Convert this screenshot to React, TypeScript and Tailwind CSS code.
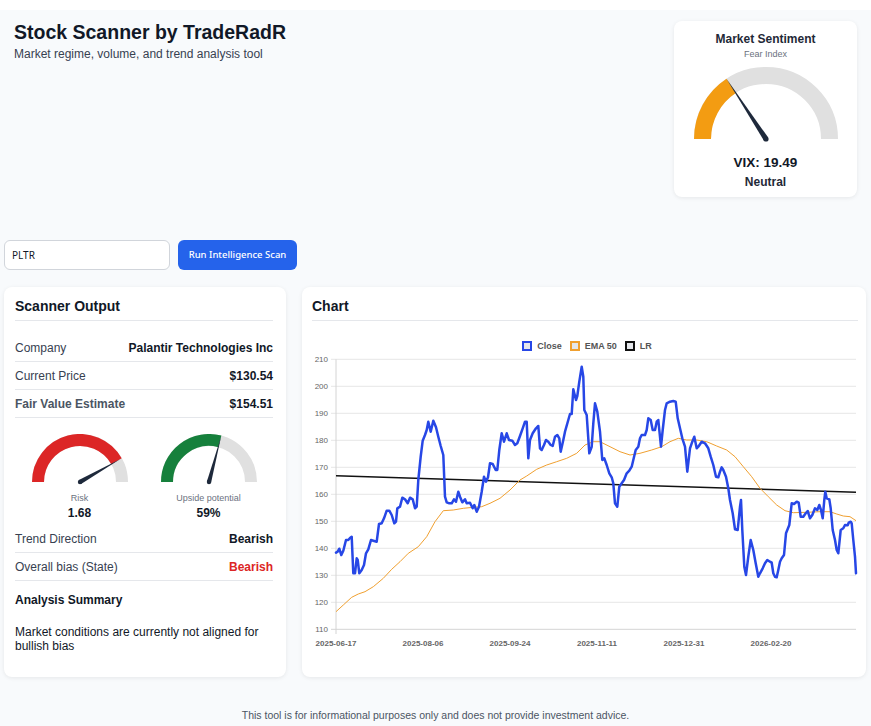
import React from "react";

// traced close / ema points, in zoomed crop coordinates (3x), converted to page coords below
const CLOSE_A: [number, number][] = [
  [108, 638], [113, 635], [118, 626], [124, 645], [130, 632], [138, 600], [145, 600], [150, 594], [155, 590],
  [160, 700], [165, 700], [170, 655], [173, 660], [178, 700], [185, 690], [192, 675], [198, 640], [205, 628],
  [213, 600], [220, 602], [230, 605], [237, 552], [245, 550], [252, 535], [260, 512], [268, 512], [275, 525],
  [283, 550], [288, 545], [292, 505], [300, 500], [307, 473], [315, 478], [323, 490], [330, 473], [338, 478],
  [345, 505], [350, 500], [355, 420], [362, 350], [368, 302], [375, 285], [380, 270], [385, 245], [392, 275],
  [400, 242], [408, 262], [415, 290], [422, 318], [430, 345], [435, 470], [440, 487], [448, 490], [455, 490],
  [462, 478], [468, 485], [475, 455], [480, 470], [487, 487], [495, 478], [500, 490], [510, 488], [518, 505],
  [523, 495], [530, 515], [537, 500], [545, 455], [552, 410], [558, 425], [564, 412], [570, 370], [578, 372],
  [587, 390], [592, 390], [598, 330], [605, 280], [612, 305], [620, 280], [627, 300], [637, 302], [645, 315],
  [652, 310], [660, 288], [668, 265], [675, 245], [680, 245], [685, 355], [690, 300], [698, 280], [708, 265],
  [715, 258], [720, 325], [725, 330], [732, 315], [738, 300], [745, 305], [752, 315], [758, 318], [765, 290],
  [772, 285], [778, 295], [782, 335], [790, 300], [795, 275], [805, 240], [810, 222], [815, 222], [820, 148],
  [828, 180], [832, 168], [838, 125],
];

const CLOSE_B: [number, number][] = [
  [5, 80], [10, 110], [13, 210], [20, 225], [28, 340], [35, 320], [40, 250], [45, 190], [52, 215], [60, 275],
  [67, 360], [73, 355], [80, 375], [88, 400], [95, 412], [100, 430], [105, 490], [112, 500], [118, 440],
  [125, 430], [132, 420], [140, 400], [148, 392], [155, 380], [160, 360], [167, 330], [175, 320], [180, 295],
  [185, 285], [195, 285], [200, 270], [205, 235], [212, 240], [218, 270], [225, 270], [230, 245], [235, 240],
  [238, 270], [243, 320], [248, 270], [255, 210], [260, 190], [270, 185], [280, 183], [287, 185], [293, 235],
  [300, 265], [307, 295], [315, 320], [322, 395], [330, 325], [337, 305], [343, 290], [350, 325], [355, 320],
  [365, 305], [375, 310], [385, 325], [392, 350], [400, 375], [408, 410], [415, 412], [420, 395], [425, 382],
  [430, 390], [438, 410], [445, 445], [450, 480], [458, 520], [465, 568], [473, 570], [480, 500], [483, 480],
  [487, 570], [493, 680], [498, 705], [505, 650], [512, 600], [520, 630], [527, 670], [535, 710], [540, 700],
  [548, 685], [555, 670], [562, 660], [570, 665], [575, 668], [580, 700], [585, 710], [590, 712], [595, 690],
  [600, 665], [605, 655], [612, 645], [618, 580], [622, 570], [628, 555], [635, 490], [642, 492], [650, 485],
  [656, 488], [662, 530], [670, 530], [677, 520], [683, 513], [690, 535], [697, 525], [705, 505], [712, 510],
  [718, 495], [723, 510], [728, 535], [733, 480], [736, 455], [740, 475], [748, 478], [752, 505], [758, 570],
  [765, 600], [770, 630], [775, 640], [782, 570], [790, 565], [795, 555], [803, 556], [806, 548], [812, 545],
  [815, 550], [820, 600], [825, 650], [828, 700],
];

const EMA_A: [number, number][] = [
  [108, 815], [130, 795], [155, 772], [175, 762], [195, 755], [220, 740], [250, 715], [275, 688], [300, 665],
  [325, 640], [355, 620], [380, 590], [405, 545], [430, 512], [460, 510], [490, 505], [520, 502], [545, 500],
  [570, 490], [600, 475], [630, 450], [660, 420], [680, 408], [710, 388], [740, 375], [770, 365], [800, 355],
  [830, 340],
];

const EMA_B: [number, number][] = [
  [0, 330], [15, 315], [40, 305], [60, 305], [90, 320], [120, 335], [150, 345], [180, 340], [215, 330],
  [245, 320], [270, 305], [295, 295], [320, 300], [350, 300], [380, 305], [410, 318], [440, 330], [465, 350],
  [490, 380], [515, 410], [540, 445], [565, 470], [590, 495], [615, 512], [640, 518], [680, 517], [720, 515],
  [750, 515], [770, 522], [790, 528], [810, 530], [828, 542],
];

const toPts = (a: [number, number][], b: [number, number][]) =>
  [...a.map(([x, y]) => [300 + x / 3, 340 + y / 3]), ...b.map(([x, y]) => [580 + x / 3, 340 + y / 3])]
    .map(([x, y]) => `${x.toFixed(1)},${y.toFixed(1)}`)
    .join(" ");

const Y_TICKS = [210, 200, 190, 180, 170, 160, 150, 140, 130, 120, 110];
const X_TICKS: [string, number][] = [
  ["2025-06-17", 336],
  ["2025-08-06", 423],
  ["2025-09-24", 510],
  ["2025-11-11", 597],
  ["2025-12-31", 684],
  ["2026-02-20", 771],
];

const FONT = { fontFamily: '"Liberation Sans", Arial, sans-serif' };

function Gauge({
  size,
  thick,
  frac,
  color,
  needleLen,
  needleW,
}: {
  size: number;
  thick: number;
  frac: number;
  color: string;
  needleLen: number;
  needleW: number;
}) {
  const R = size / 2;
  const cx = R;
  const cy = R;
  const rm = R - thick / 2;
  const th = Math.PI * frac;
  const ex = cx - rm * Math.cos(th);
  const ey = cy - rm * Math.sin(th);
  const tx = cx - needleLen * Math.cos(th);
  const ty = cy - needleLen * Math.sin(th);
  // perpendicular for needle base
  const px = Math.sin(th) * needleW;
  const py = -Math.cos(th) * needleW;
  return (
    <svg width={size} height={R + needleW + 1} viewBox={`0 0 ${size} ${R + needleW + 1}`}>
      <path d={`M ${cx - rm} ${cy} A ${rm} ${rm} 0 0 1 ${cx + rm} ${cy}`} fill="none" stroke="#e0e0e0" strokeWidth={thick} />
      <path d={`M ${cx - rm} ${cy} A ${rm} ${rm} 0 0 1 ${ex} ${ey}`} fill="none" stroke={color} strokeWidth={thick} />
      <polygon points={`${cx + px},${cy + py} ${cx - px},${cy - py} ${tx},${ty}`} fill="#1e293b" />
      <circle cx={cx} cy={cy} r={needleW} fill="#1e293b" />
    </svg>
  );
}

function Row({
  label,
  value,
  labelClass = "text-[#374151]",
  valueClass = "text-[#111827]",
}: {
  label: string;
  value: string;
  labelClass?: string;
  valueClass?: string;
}) {
  return (
    <div className="flex h-[28px] items-center justify-between border-b border-[#e5e7eb] text-[12px] leading-[14px]">
      <span className={labelClass}>{label}</span>
      <span className={`font-bold ${valueClass}`}>{value}</span>
    </div>
  );
}

function LegendItem({ label, color }: { label: string; color: string }) {
  return (
    <div className="flex items-center gap-[5px]">
      <span className="h-[10px] w-[10px] border-2 bg-[#e5e7eb]" style={{ borderColor: color }} />
      <span className="text-[9px] font-bold leading-[12px] text-[#555]">{label}</span>
    </div>
  );
}

function Chart() {
  return (
    <svg width={546} height={300} viewBox="312 352 546 300" style={FONT}>
      {Y_TICKS.map((v, i) => {
        const y = 359.3 + i * 27;
        return (
          <g key={v}>
            <line x1={331} x2={856} y1={y} y2={y} stroke={i === 10 ? "#d4d4d4" : "#e6e6e6"} strokeWidth={1} />
            <text x={328} y={y + 3} textAnchor="end" fontSize={8} fill="#666">
              {v}
            </text>
          </g>
        );
      })}
      <line x1={336} x2={336} y1={359.3} y2={634} stroke="#d4d4d4" strokeWidth={1} />
      {X_TICKS.map(([t, x]) => (
        <text key={t} x={x} y={646} textAnchor="middle" fontSize={8} fontWeight={700} fill="#666">
          {t}
        </text>
      ))}
      <line x1={336} y1={475.7} x2={856} y2={492.3} stroke="#111" strokeWidth={1.5} />
      <polyline points={toPts(EMA_A, EMA_B)} fill="none" stroke="#f0a030" strokeWidth={1} strokeLinejoin="round" />
      <polyline
        points={toPts(CLOSE_A, CLOSE_B)}
        fill="none"
        stroke="#2747e6"
        strokeWidth={2.5}
        strokeLinejoin="round"
        strokeLinecap="round"
      />
    </svg>
  );
}

export default function App() {
  return (
    <div className="h-[726px] overflow-hidden bg-white pt-[10px]" style={FONT}>
      <main className="h-[716px] bg-[#f8fafc]">
        <header className="flex items-start justify-between pl-[14px] pr-[14px] pt-[8px]">
          <div>
            <h1 className="text-[19.5px] font-bold leading-[28px] text-[#111827]">Stock Scanner by TradeRadR</h1>
            <p className="text-[12px] leading-[16px] text-[#374151]">Market regime, volume, and trend analysis tool</p>
          </div>
          <div className="mt-[3px] flex h-[176px] w-[183px] flex-col items-center rounded-lg bg-white pt-[11px] shadow-[0_1px_4px_rgba(0,0,0,0.08)]">
            <div className="text-[12px] font-bold leading-[15px] text-[#1f2937]">Market Sentiment</div>
            <div className="mt-[2px] text-[9px] leading-[11px] text-[#6b7280]">Fear Index</div>
            <div className="mt-[7px]">
              <Gauge size={144} thick={17} frac={0.315} color="#f39c12" needleLen={72} needleW={2.6} />
            </div>
            <div className="mt-[11px] text-[13.5px] font-bold leading-[17px] text-[#111827]">VIX: 19.49</div>
            <div className="mt-[4px] text-[12px] font-bold leading-[15px] text-[#1f2937]">Neutral</div>
          </div>
        </header>

        <div className="mt-[43px] flex gap-2 px-[4px]" style={{ fontFamily: '"Noto Sans", "Open Sans", sans-serif' }}>
          <input
            defaultValue="PLTR"
            className="h-[30px] w-[166px] rounded-md border border-[#d1d5db] bg-white px-[7px] text-[10px] text-[#111827] outline-none"
          />
          <button className="h-[30px] w-[119px] rounded-md bg-[#2563eb] text-[9.5px] font-medium text-white">
            Run Intelligence Scan
          </button>
        </div>

        <div className="mt-[17px] grid h-[390px] w-[862px] grid-cols-[282px_564px] gap-4 ml-[4px]">
          <section className="rounded-lg bg-white pl-[11px] pr-[13px] pt-[11px] shadow-[0_1px_4px_rgba(0,0,0,0.08)]">
            <h2 className="border-b border-[#e5e7eb] pb-[6px] text-[14px] font-bold leading-[16px] text-[#111827]">
              Scanner Output
            </h2>
            <div className="mt-[13px]">
              <Row label="Company" value="Palantir Technologies Inc" />
              <Row label="Current Price" value="$130.54" />
              <Row label="Fair Value Estimate" value="$154.51" labelClass="font-semibold text-[#4b5563]" />
            </div>
            <div className="grid grid-cols-2 pt-[16px] pb-[5px]">
              <div className="flex flex-col items-center">
                <Gauge size={96} thick={12} frac={0.835} color="#dc2626" needleLen={46} needleW={2.2} />
                <div className="mt-[8px] text-[9px] leading-[11px] text-[#6b7280]">Risk</div>
                <div className="mt-[2px] text-[12px] font-bold leading-[14px] text-[#111827]">1.68</div>
              </div>
              <div className="flex flex-col items-center">
                <Gauge size={96} thick={12} frac={0.583} color="#16803c" needleLen={47} needleW={2.2} />
                <div className="mt-[8px] text-[9px] leading-[11px] text-[#6b7280]">Upside potential</div>
                <div className="mt-[2px] text-[12px] font-bold leading-[14px] text-[#111827]">59%</div>
              </div>
            </div>
            <Row label="Trend Direction" value="Bearish" />
            <Row label="Overall bias (State)" value="Bearish" valueClass="text-[#dc2626]" />
            <h3 className="mt-[12px] text-[12px] font-bold leading-[15px] text-[#111827]">Analysis Summary</h3>
            <p className="mt-[17px] text-[12px] leading-[14px] text-[#111827]">
              Market conditions are currently not aligned for bullish bias
            </p>
          </section>

          <section className="rounded-lg bg-white pl-[10px] pr-[8px] pt-[11px] shadow-[0_1px_4px_rgba(0,0,0,0.08)]">
            <h2 className="border-b border-[#e5e7eb] pb-[6px] text-[14px] font-bold leading-[16px] text-[#111827]">
              Chart
            </h2>
            <div className="mt-[19px] flex h-[12px] items-center justify-center gap-[8px] pl-[4px]">
              <LegendItem label="Close" color="#2747e6" />
              <LegendItem label="EMA 50" color="#f0a030" />
              <LegendItem label="LR" color="#111" />
            </div>
            <Chart />
          </section>
        </div>

        <footer className="mt-[31px] text-center text-[10.5px] leading-[14px] text-[#4b5563]">
          This tool is for informational purposes only and does not provide investment advice.
        </footer>
      </main>
    </div>
  );
}
